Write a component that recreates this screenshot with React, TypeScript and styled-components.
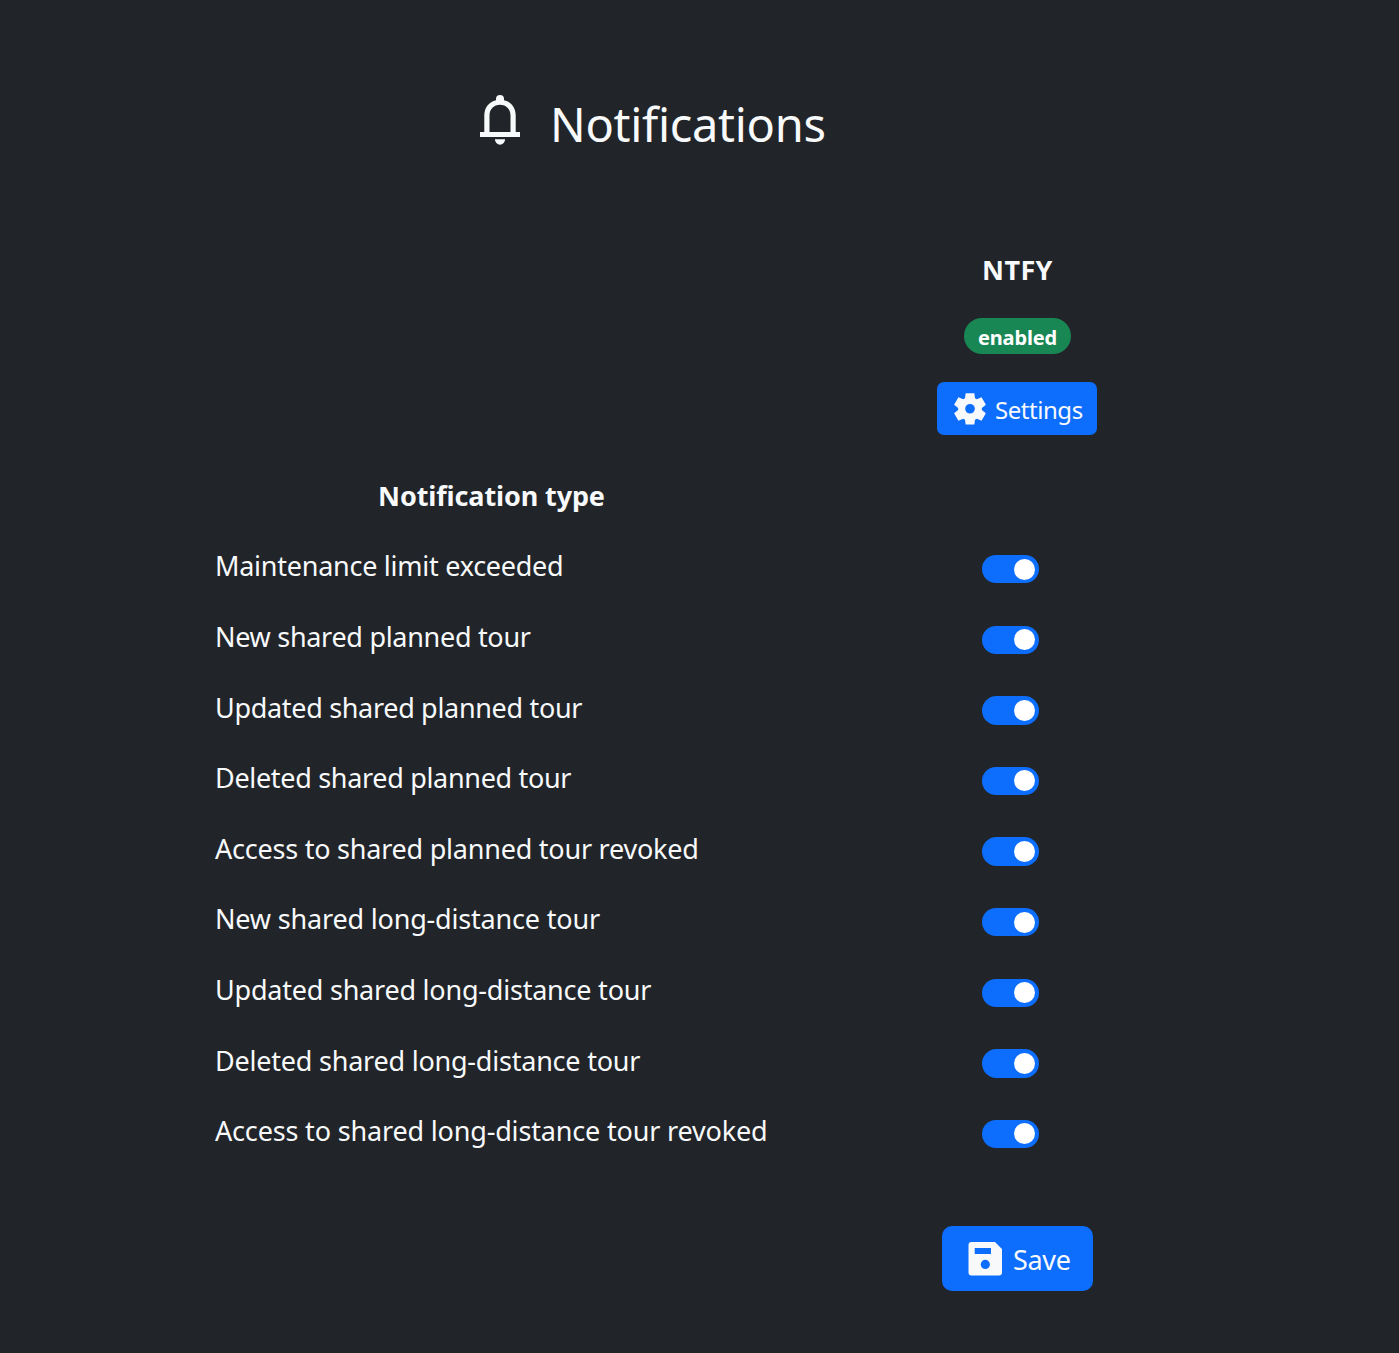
import React from "react";
import styled, { createGlobalStyle } from "styled-components";

const GlobalStyle = createGlobalStyle`
  *, *::before, *::after { box-sizing: border-box; }
  body {
    margin: 0;
    background: #212529;
    color: #f8f9fa;
    font-family: "Noto Sans", "Open Sans", sans-serif;
    font-size: 27px;
    line-height: 42px;
  }
`;

const Page = styled.main`
  min-height: 1353px;
  padding: 90px 207px 0;
`;

const Title = styled.h1`
  display: flex;
  align-items: flex-start;
  gap: 20px;
  height: 136px;
  margin: 0;
  padding-left: 263px;
  font-size: 47px;
  line-height: 68px;
  font-weight: 400;
`;

const Grid = styled.div`
  display: grid;
  grid-template-columns: 569px 483px;
`;

const Channel = styled.div`
  grid-column: 2;
  display: flex;
  flex-direction: column;
  align-items: center;
  height: 242px;
  padding-top: 23px;
`;

const ChannelName = styled.div`
  font-weight: 700;
  height: 69px;
`;

const Badge = styled.span`
  width: 107px;
  height: 36px;
  border-radius: 18px;
  background: #198754;
  color: #fff;
  font-size: 20px;
  font-weight: 700;
  line-height: 39px;
  text-align: center;
`;

const Button = styled.button<{ $large?: boolean }>`
  display: flex;
  align-items: center;
  width: ${(p) => (p.$large ? 151 : 160)}px;
  height: ${(p) => (p.$large ? 65 : 53)}px;
  padding: ${(p) => (p.$large ? "0 0 0 23px" : "0 0 0 14px")};
  gap: ${(p) => (p.$large ? 8 : 6)}px;
  border: 0;
  border-radius: ${(p) => (p.$large ? 10 : 7)}px;
  background: #0d6efd;
  color: #f8f9fa;
  font-family: inherit;
  font-size: ${(p) => (p.$large ? 27 : 24)}px;
`;

const SettingsSlot = styled.div`
  margin: 28px 1px 0 0;
`;

const Label = styled.span<{ $track?: number }>`
  white-space: nowrap;
  letter-spacing: ${(p) => p.$track ?? 0}px;
`;

const ButtonLabel = styled(Label)`
  padding-top: 2px;
`;

const TypeHeader = styled.div`
  height: 71px;
  padding-top: 7px;
  font-weight: 700;
  text-align: center;
`;

const Row = styled.label`
  grid-column: 1 / -1;
  display: grid;
  grid-template-columns: subgrid;
  height: 70.6px;
  padding: 6.4px 0 0 8px;
`;

const SwitchSlot = styled.span`
  display: flex;
  padding: 9.6px 0 0 206px;
`;

const Switch = styled.input`
  appearance: none;
  display: flex;
  justify-content: flex-start;
  align-items: center;
  width: 57px;
  height: 28.4px;
  margin: 0;
  padding: 0 4px;
  border-radius: 15px;
  background: #495057;

  &::before {
    content: "";
    width: 21px;
    height: 21px;
    border-radius: 50%;
    background: #fff;
  }
  &:checked {
    justify-content: flex-end;
    background: #0d6efd;
  }
`;

const Footer = styled.div`
  grid-column: 2;
  display: flex;
  justify-content: center;
  padding-top: 52px;
`;

const BellIcon = () => (
  <svg width="60" height="60" viewBox="0 0 60 60" fill="currentColor" fillRule="evenodd">
    <path d="M10 42H14.300V25.500C14.300 17.500 19 11.800 26 10.200V9A4 4 0 0 1 34 9V10.200C41 11.800 45.700 17.500 45.700 25.500V42H50V47H10ZM19.500 42H40.500V25.500C40.500 19 36 14.800 30 14.800S19.500 19 19.500 25.500ZM24.900 49.200H35.100A5.100 5.500 0 0 1 24.900 49.200Z" />
  </svg>
);

const GearIcon = () => (
  <svg width="38" height="38" viewBox="0 -960 960 960" fill="currentColor" fillRule="evenodd">
    <path d="m370-90-16-118q-13-5-24.500-12T307-235l-119 50L78-375l103-78q-1-7-1-13.500v-27q0-6.500 1-13.500L78-585l110-190 119 50q11-8 23-15t24-12l16-128h220l16 128q13 5 24.500 12t22.500 15l119-50 110 190-103 78q1 7 1 13.500v27q0 6.500-2 13.500l103 78-110 190-118-50q-11 8-23 15t-24 12L590-90H370ZM480-365A122 122 0 1 0 480-609A122 122 0 1 0 480-365Z" />
  </svg>
);

const SaveIcon = () => (
  <svg width="40" height="40" viewBox="0 0 40 40" fill="currentColor" fillRule="evenodd">
    <path d="M6 3H30L37 10V33.500Q37 36.500 34 36.500H6.500Q3.500 36.500 3.500 33.500V6Q3.500 3 6.500 3ZM9.700 9V15H26V9ZM20.300 20.800A4.600 4.600 0 1 0 20.300 30A4.600 4.600 0 1 0 20.300 20.800Z" />
  </svg>
);

const types = [
  { name: "Maintenance limit exceeded", track: -0.26 },
  { name: "New shared planned tour", track: -0.3 },
  { name: "Updated shared planned tour", track: -0.32 },
  { name: "Deleted shared planned tour", track: -0.32 },
  { name: "Access to shared planned tour revoked", track: -0.23 },
  { name: "New shared long-distance tour", track: -0.18 },
  { name: "Updated shared long-distance tour", track: -0.22 },
  { name: "Deleted shared long-distance tour", track: -0.22 },
  { name: "Access to shared long-distance tour revoked", track: -0.17 },
];

export default function App() {
  return (
    <>
      <GlobalStyle />
      <Page>
        <Title>
          <BellIcon />
          <Label $track={-0.3}>Notifications</Label>
        </Title>
        <Grid>
          <Channel>
            <ChannelName>
              <Label $track={0.4}>NTFY</Label>
            </ChannelName>
            <Badge>
              <Label $track={-0.15}>enabled</Label>
            </Badge>
            <SettingsSlot>
              <Button>
                <GearIcon />
                <ButtonLabel $track={-0.45}>Settings</ButtonLabel>
              </Button>
            </SettingsSlot>
          </Channel>
          <TypeHeader>
            <Label $track={-0.12}>Notification type</Label>
          </TypeHeader>
          {types.map((t) => (
            <Row key={t.name}>
              <Label $track={t.track}>{t.name}</Label>
              <SwitchSlot>
                <Switch type="checkbox" defaultChecked />
              </SwitchSlot>
            </Row>
          ))}
          <Footer>
            <Button $large>
              <SaveIcon />
              <ButtonLabel $track={-0.3}>Save</ButtonLabel>
            </Button>
          </Footer>
        </Grid>
      </Page>
    </>
  );
}
